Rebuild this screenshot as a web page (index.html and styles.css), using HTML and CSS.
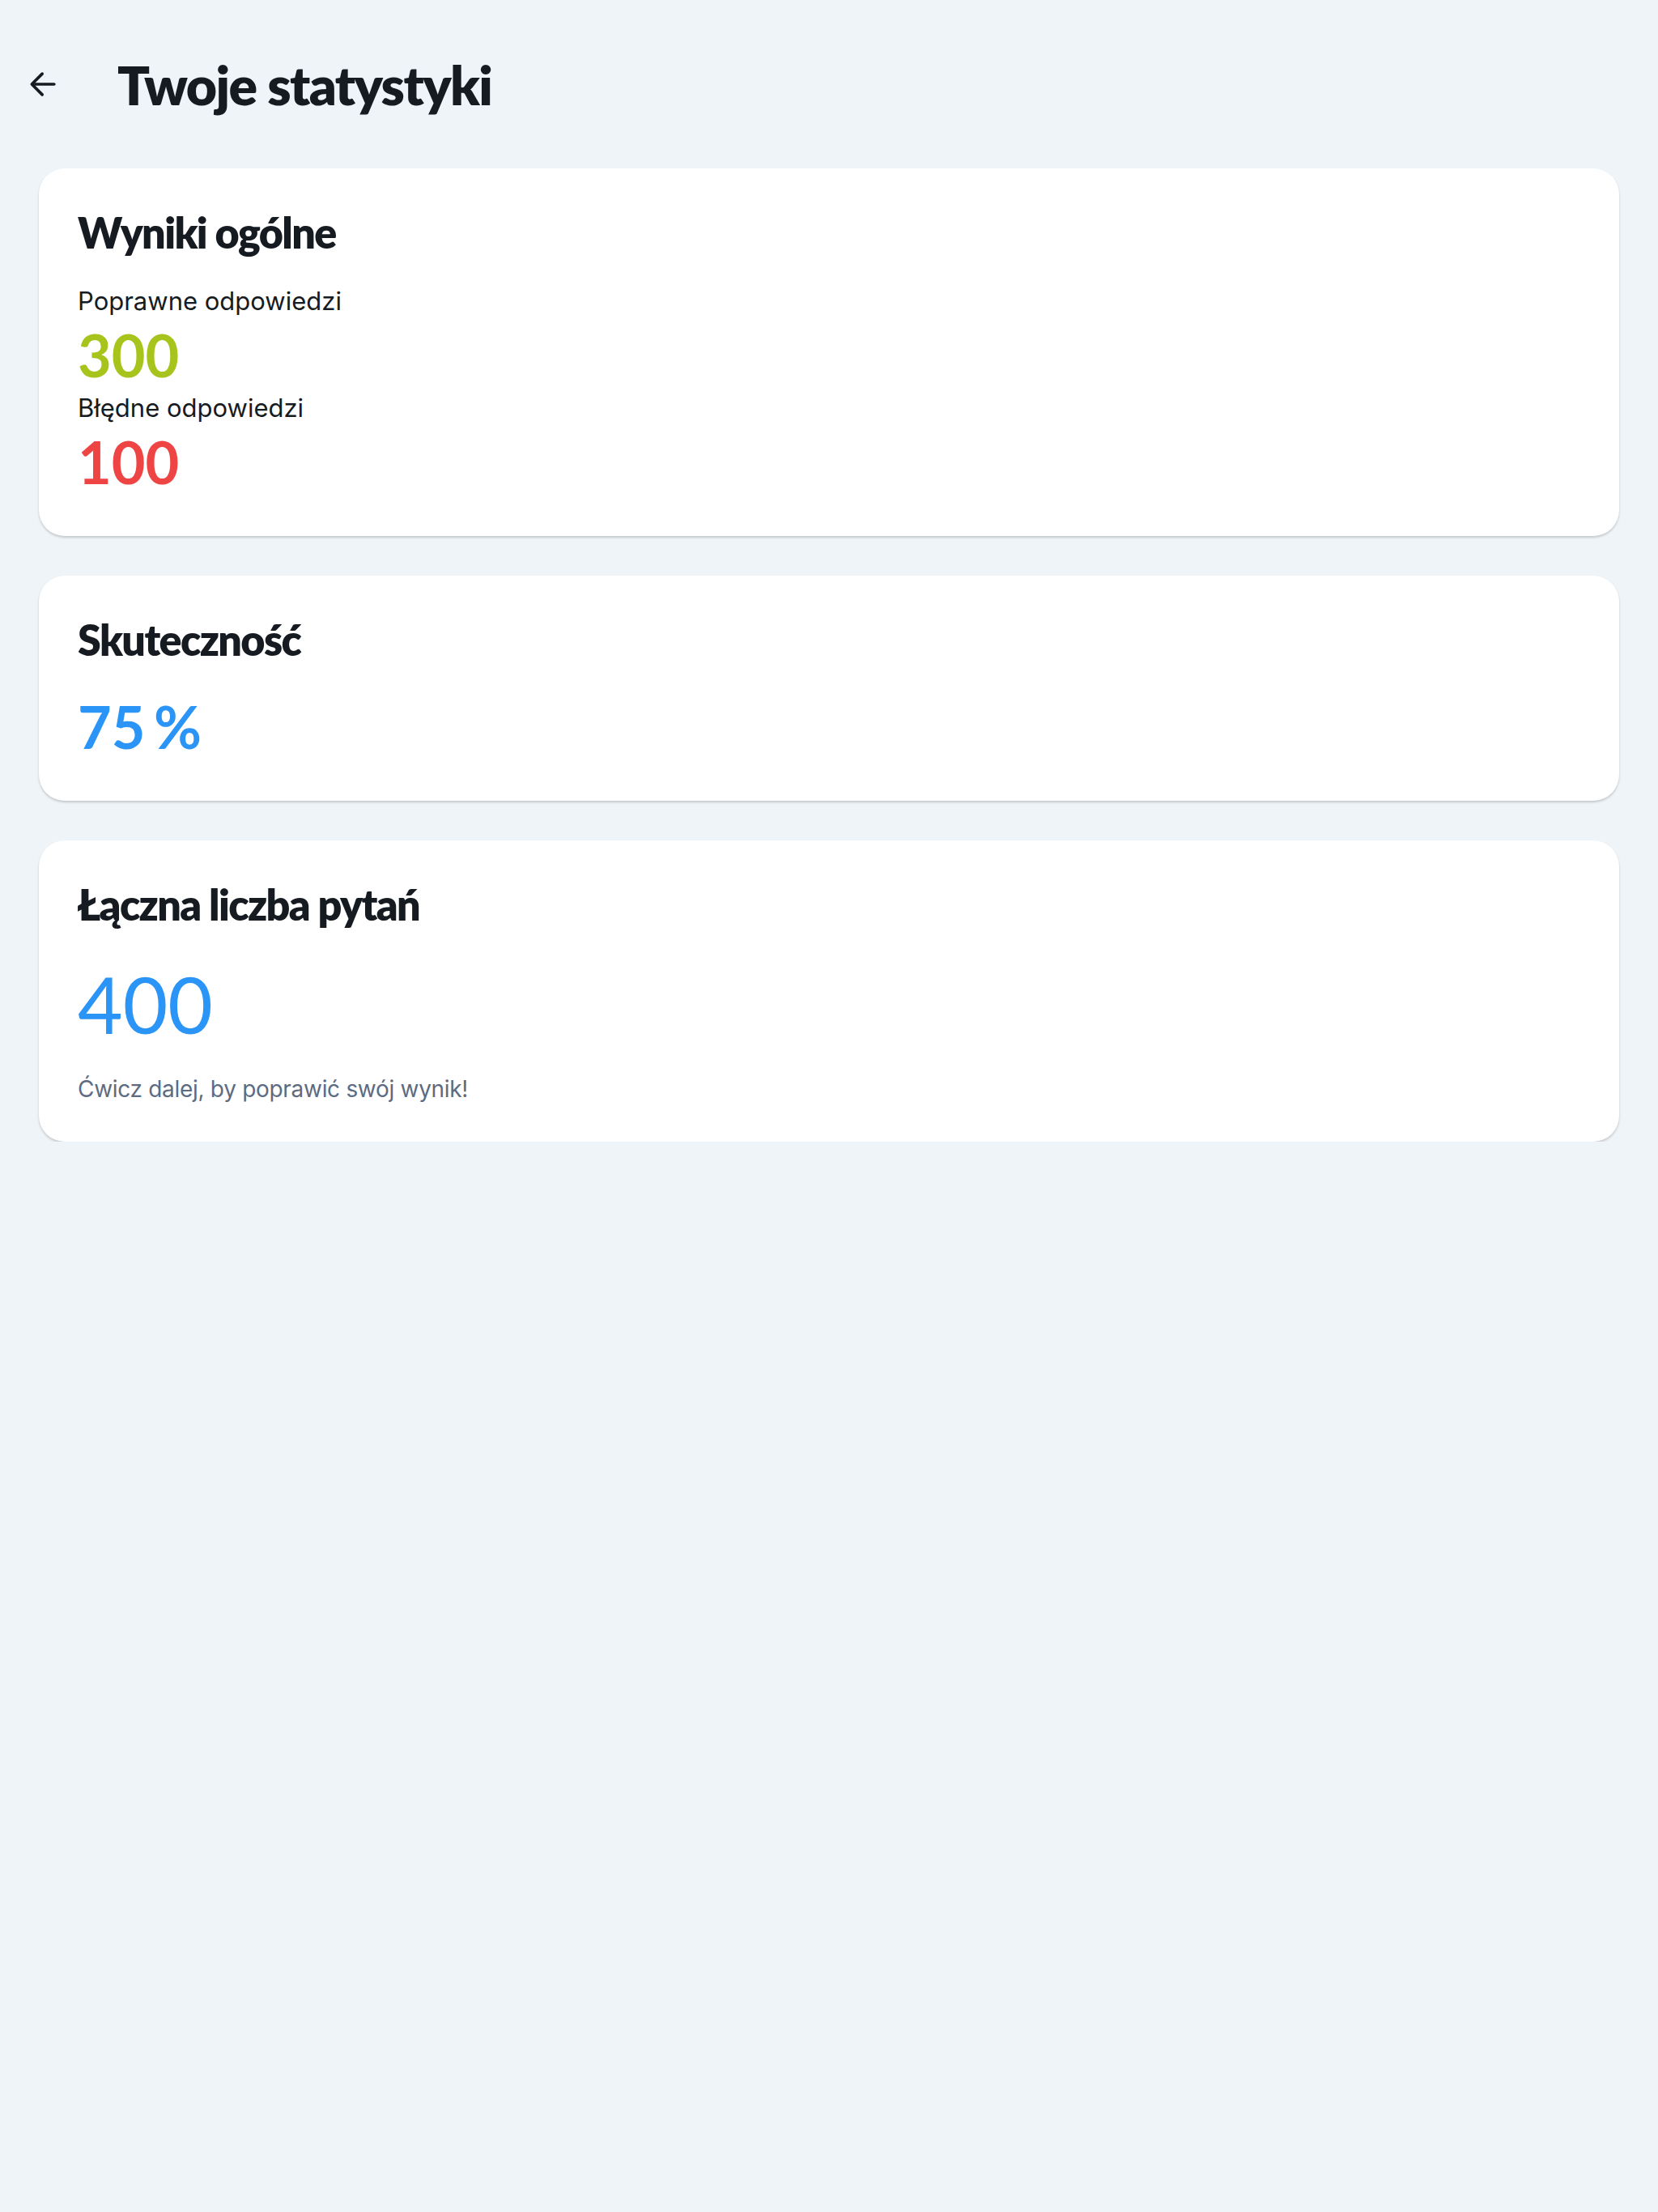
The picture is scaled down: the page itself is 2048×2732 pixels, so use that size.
FILE: index.html
```html
<!DOCTYPE html>
<html lang="pl">
<head>
    <meta charset="UTF-8">
    <meta name="viewport" content="width=device-width, initial-scale=1.0">
    <title>Twoje statystyki</title>
    <link rel="stylesheet" href="styles.css">
</head>
<body>
    <header class="top-bar">
        <button class="back-btn" aria-label="Wstecz">
            <svg width="44" height="44" viewBox="0 0 24 24" fill="none" stroke="#161b22" stroke-width="2" stroke-linecap="round" stroke-linejoin="round">
                <path d="M19 12H5"/>
                <path d="M11 5l-7 7 7 7"/>
            </svg>
        </button>
        <h1 class="page-title">Twoje statystyki</h1>
    </header>

    <main class="stats">
        <section class="card">
            <h2 class="card-title">Wyniki ogólne</h2>
            <div class="stat-label">Poprawne odpowiedzi</div>
            <div class="stat-value correct">300</div>
            <div class="stat-label">Błędne odpowiedzi</div>
            <div class="stat-value wrong">100</div>
        </section>

        <section class="card">
            <h2 class="card-title">Skuteczność</h2>
            <div class="stat-value accuracy">75 %</div>
        </section>

        <section class="card">
            <h2 class="card-title">Łączna liczba pytań</h2>
            <div class="stat-total">400</div>
            <p class="hint">Ćwicz dalej, by poprawić swój wynik!</p>
        </section>
    </main>
</body>
</html>
```

FILE: styles.css
```css
body {
    margin: 0;
    background-color: #eff4f8;
    font-family: Inter, "Noto Sans", sans-serif;
    color: #161b22;
}

.top-bar {
    display: flex;
    align-items: center;
    height: 208px;
    padding: 0 24px;
    box-sizing: border-box;
}

.back-btn {
    background: none;
    border: none;
    padding: 8px;
    margin-right: 61px;
    display: flex;
    cursor: pointer;
}

.page-title {
    margin: 0;
    font-family: Lato, sans-serif;
    font-weight: 800;
    font-size: 66px;
    letter-spacing: -1.6px;
}

.stats {
    display: flex;
    flex-direction: column;
    gap: 49px;
    padding: 0 48px;
}

.card {
    background: #fff;
    border-radius: 32px;
    padding: 48px;
    box-shadow: 0 2px 3px rgba(0, 0, 0, 0.18);
}

.card-title {
    margin: 0 0 32px;
    font-family: Lato, sans-serif;
    font-weight: 800;
    font-size: 52px;
    letter-spacing: -1.6px;
}

.stat-label {
    font-size: 31px;
    line-height: 44px;
}

.stat-value {
    font-family: Lato, sans-serif;
    font-weight: 700;
    font-size: 72px;
    line-height: 88px;
}

.correct {
    color: #a7c41d;
}

.wrong {
    color: #ef4444;
}

.accuracy {
    color: #2b95f7;
    margin-top: 28px;
    word-spacing: -7px;
}

.stat-total {
    font-family: Lato, sans-serif;
    font-weight: 400;
    font-size: 96px;
    line-height: 120px;
    color: #2b95f7;
    margin-top: 26px;
}

.hint {
    margin: 28px 0 0;
    font-size: 28px;
    letter-spacing: -0.3px;
    color: #5d6b82;
}
```
